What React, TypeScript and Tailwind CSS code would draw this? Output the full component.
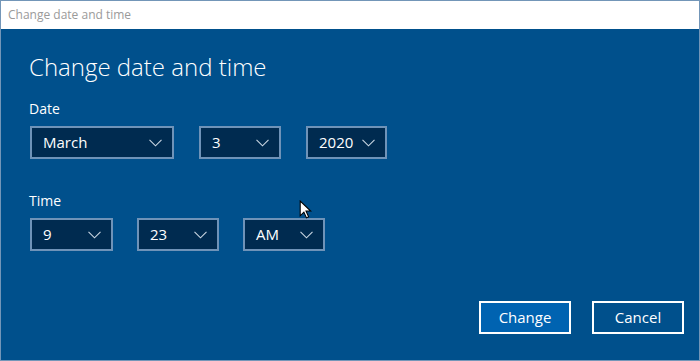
import React from 'react';

function Chevron() {
  return (
    <svg width="13" height="8" viewBox="0 0 13 8" fill="none" className="shrink-0">
      <polyline points="0.5,0.8 6.5,6.8 12.5,0.8" stroke="#c9d6e3" strokeWidth="1.1" />
    </svg>
  );
}

function Picker({ value, width }: { value: string; width: string }) {
  return (
    <div
      className={`${width} flex h-[33px] items-center justify-between border-2 border-[#6f93b8] bg-[#002b50] pl-[11px] pr-[10px] text-[15px] text-white`}
    >
      <span>{value}</span>
      <Chevron />
    </div>
  );
}

function Cursor() {
  return (
    <svg width="15" height="21" viewBox="0 0 14 20" className="absolute left-[298px] top-[199px]">
      <path d="M1 1 L1 15 L4.5 11.5 L7 17 L9 16 L6.5 10.5 L11 10.5 Z" fill="#fff" stroke="#000" strokeWidth="1" />
    </svg>
  );
}

export default function App() {
  return (
    <div
      className="relative flex h-[361px] w-[700px] flex-col border border-[#7396b8] bg-[#00508c]"
      style={{ fontFamily: '"Open Sans", "Noto Sans", sans-serif' }}
    >
      <div className="flex h-[28px] items-center bg-white pl-[7px] text-[12px] text-[#9a9a9a]">
        Change date and time
      </div>

      <div className="flex flex-1 flex-col px-[28px] text-white">
        <h1 className="mt-[23px] text-[24px] font-light leading-[30px]">Change date and time</h1>

        <div className="mt-[18px] text-[14px] leading-[18px]">Date</div>
        <div className="mt-[8px] flex gap-[25px] pl-[1px]">
          <Picker value="March" width="w-[144px]" />
          <Picker value="3" width="w-[82px]" />
          <Picker value="2020" width="w-[81px]" />
        </div>

        <div className="mt-[33px] text-[14px] leading-[18px]">Time</div>
        <div className="mt-[8px] flex gap-[24px] pl-[1px]">
          <Picker value="9" width="w-[83px]" />
          <Picker value="23" width="w-[82px]" />
          <Picker value="AM" width="w-[82px]" />
        </div>

        <div className="mt-auto mb-[26px] flex justify-end gap-[21px]">
          <button className="h-[33px] w-[92px] border-2 border-white bg-[#0063b1] text-[15px] text-white">
            Change
          </button>
          <button className="mr-[-13px] h-[33px] w-[92px] border-2 border-white bg-transparent text-[15px] text-white">
            Cancel
          </button>
        </div>
      </div>

      <Cursor />
    </div>
  );
}
